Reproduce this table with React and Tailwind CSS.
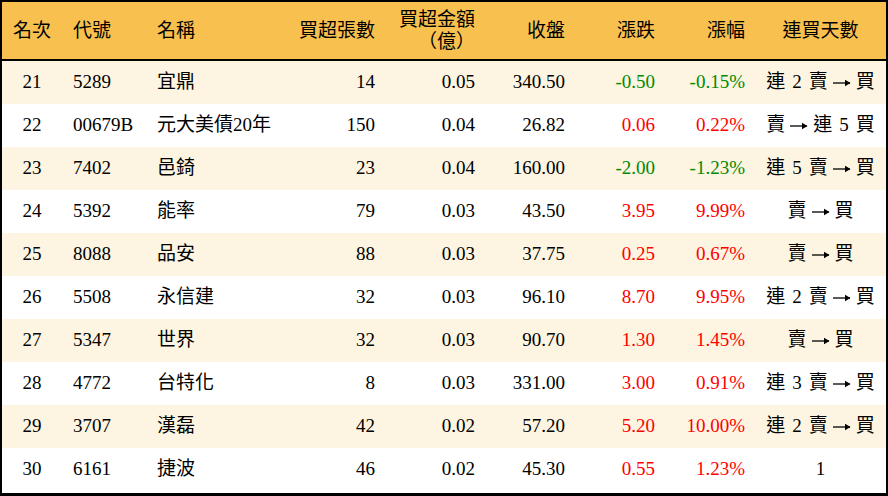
const rows = [
  ["21", "5289", "宜鼎", "14", "0.05", "340.50", "-0.50", "-0.15%", "連 2 賣 → 買"],
  ["22", "00679B", "元大美債20年", "150", "0.04", "26.82", "0.06", "0.22%", "賣 → 連 5 買"],
  ["23", "7402", "邑錡", "23", "0.04", "160.00", "-2.00", "-1.23%", "連 5 賣 → 買"],
  ["24", "5392", "能率", "79", "0.03", "43.50", "3.95", "9.99%", "賣 → 買"],
  ["25", "8088", "品安", "88", "0.03", "37.75", "0.25", "0.67%", "賣 → 買"],
  ["26", "5508", "永信建", "32", "0.03", "96.10", "8.70", "9.95%", "連 2 賣 → 買"],
  ["27", "5347", "世界", "32", "0.03", "90.70", "1.30", "1.45%", "賣 → 買"],
  ["28", "4772", "台特化", "8", "0.03", "331.00", "3.00", "0.91%", "連 3 賣 → 買"],
  ["29", "3707", "漢磊", "42", "0.02", "57.20", "5.20", "10.00%", "連 2 賣 → 買"],
  ["30", "6161", "捷波", "46", "0.02", "45.30", "0.55", "1.23%", "1"],
];

const cols =
  "grid grid-cols-[60px_85px_113px_125px_100px_90px_90px_90px_131px] items-center";

function Arrow() {
  return (
    <svg width="18" height="10" viewBox="0 0 18 10" className="mx-[5px] shrink-0">
      <line x1="0" y1="5" x2="17" y2="5" stroke="black" strokeWidth="1.3" />
      <path d="M12 1.8 L17.5 5 L12 8.2 Z" fill="black" />
    </svg>
  );
}

// 連買天數 cell: tokens split on spaces, arrow as a small drawing
function Streak({ text }) {
  const tokens = text.split(" ");
  return (
    <div className="flex items-center justify-center">
      {tokens.map((t, i) => {
        if (t === "→") return <Arrow key={i} />;
        const next = tokens[i + 1];
        const gap = next && next !== "→" ? "mr-[7px]" : "";
        return (
          <span key={i} className={gap}>
            {t}
          </span>
        );
      })}
    </div>
  );
}

export default function App() {
  return (
    <div
      className="w-[888px] h-[496px] border-2 border-b-[3px] border-black bg-white text-black text-[19px]"
      style={{ fontFamily: '"Liberation Serif", "Noto Sans CJK TC", serif' }}
    >
      <div className={`${cols} h-[59px] bg-[#f8c14f] border-b-2 border-black leading-[21px]`}>
        <div className="text-center">名次</div>
        <div className="pl-[11px]">代號</div>
        <div className="pl-[10px]">名稱</div>
        <div className="text-right pr-[10px]">買超張數</div>
        <div className="text-right pr-[10px] pb-[2px] leading-[20px]">
          <div>買超金額</div>
          <div style={{ fontFamily: '"Noto Sans CJK TC", serif' }}>（億）</div>
        </div>
        <div className="text-right pr-[10px]">收盤</div>
        <div className="text-right pr-[10px]">漲跌</div>
        <div className="text-right pr-[10px]">漲幅</div>
        <div className="text-center">連買天數</div>
      </div>
      {rows.map((r, i) => {
        const down = r[6].startsWith("-");
        const tone = down ? "text-[#008a00]" : "text-[#ff0000]";
        return (
          <div
            key={r[0]}
            className={`${cols} h-[43px] ${i % 2 === 0 ? "bg-[#fdf5e1]" : "bg-white"}`}
          >
            <div className="text-center">{r[0]}</div>
            <div className="pl-[11px]">{r[1]}</div>
            <div className="pl-[10px] whitespace-nowrap">{r[2]}</div>
            <div className="text-right pr-[10px]">{r[3]}</div>
            <div className="text-right pr-[10px]">{r[4]}</div>
            <div className="text-right pr-[10px]">{r[5]}</div>
            <div className={`text-right pr-[10px] ${tone}`}>{r[6]}</div>
            <div className={`text-right pr-[10px] ${tone}`}>{r[7]}</div>
            <Streak text={r[8]} />
          </div>
        );
      })}
    </div>
  );
}
